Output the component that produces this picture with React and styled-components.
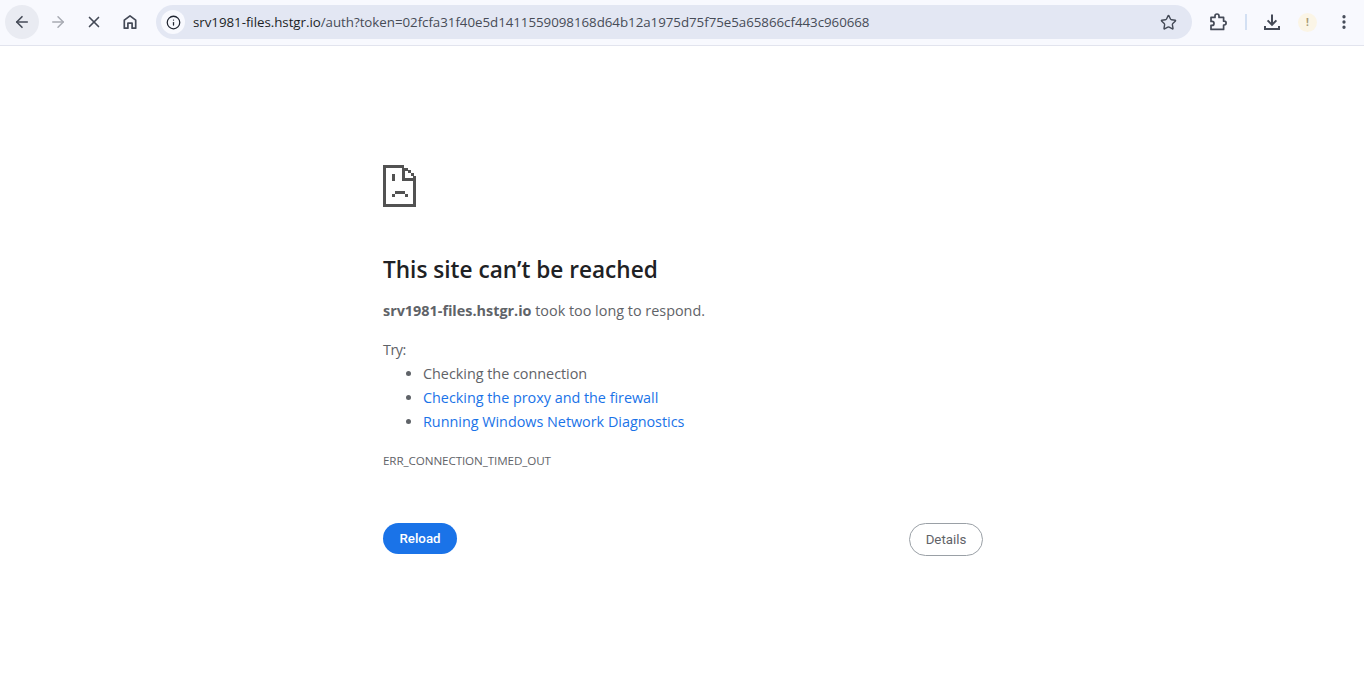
import React from "react";
import styled, { createGlobalStyle } from "styled-components";
import { ArrowLeft, ArrowRight, X, Info, Star, EllipsisVertical } from "lucide-react";

const GlobalStyle = createGlobalStyle`
  html, body {
    margin: 0;
    padding: 0;
    background: #fff;
  }
  body {
    font-family: "Open Sans", "Noto Sans", sans-serif;
    overflow: hidden;
  }
`;

const Page = styled.div`
  width: 1364px;
  height: 678px;
  display: flex;
  flex-direction: column;
`;

const Toolbar = styled.div`
  height: 46px;
  box-sizing: border-box;
  background: #f8f9fe;
  border-bottom: 1px solid #e2e4ee;
  display: flex;
  align-items: center;
  padding: 0 3px 1px 5px;
`;

const NavButton = styled.div`
  width: 34px;
  height: 34px;
  margin-right: 2px;
  border-radius: 50%;
  flex: none;
  display: flex;
  align-items: center;
  justify-content: center;
  color: ${(p) => (p.$disabled ? "#a8abb3" : "#444a57")};
  background: ${(p) => (p.$active ? "#e9ebf2" : "transparent")};
`;

const Omnibox = styled.div`
  flex: none;
  width: 1036px;
  height: 34px;
  margin-left: 7px;
  border-radius: 17px;
  background: #e3e7f3;
  display: flex;
  align-items: center;
  padding: 0 7px 0 5px;
  box-sizing: border-box;
`;

const InfoChip = styled.div`
  width: 24px;
  height: 24px;
  border-radius: 50%;
  background: #f8f9fe;
  color: #1f2430;
  display: flex;
  align-items: center;
  justify-content: center;
  flex: none;
`;

const Url = styled.div`
  margin-left: 8px;
  flex: 1;
  font-size: 13.33px;
  letter-spacing: -0.04px;
  color: #474c57;
  white-space: nowrap;
  b {
    font-weight: 400;
    color: #1c1f26;
  }
`;

const StarButton = styled.div`
  color: #444a57;
  display: flex;
  margin-right: 8px;
`;

const Actions = styled.div`
  display: flex;
  align-items: center;
  margin-left: 9px;
  flex: 1;
`;

const Divider = styled.div`
  width: 2px;
  height: 16px;
  margin: 0 8px;
  background: #d3e0f3;
`;

const Avatar = styled.div`
  width: 19px;
  height: 19px;
  margin: 0 10px 0 7px;
  border-radius: 50%;
  background: #fbf5e6;
  color: #a89a74;
  font-size: 10px;
  font-weight: 700;
  display: flex;
  align-items: center;
  justify-content: center;
`;

const Content = styled.main`
  width: 600px;
  margin-left: 383px;
  padding-top: 119px;
  color: #5f6368;
`;

const ErrorIcon = styled.svg`
  display: block;
  width: 33px;
  height: 42px;
`;

const Heading = styled.h1`
  margin: 48px 0 0;
  font-size: 22.6px;
  line-height: 30px;
  font-weight: 600;
  color: #202124;
`;

const Summary = styled.p`
  margin: 14px 0 0;
  font-size: 14.4px;
  line-height: 24px;
  color: #5f6368;
  b {
    font-weight: 700;
  }
`;

const TryLabel = styled.p`
  margin: 15px 0 0;
  font-size: 14.4px;
  line-height: 24px;
  letter-spacing: -0.5px;
`;

const Suggestions = styled.ul`
  margin: 0;
  padding-left: 40px;
  font-size: 14.4px;
  line-height: 24px;
  letter-spacing: -0.02px;
  color: #5f6368;
`;

const Suggestion = styled.li`
  color: ${(p) => (p.$link ? "#1a73e8" : "#5f6368")};
  &::marker {
    color: #5f6368;
  }
`;

const ErrorCode = styled.div`
  margin-top: 19px;
  font-size: 11.65px;
  line-height: 16px;
  letter-spacing: -0.1px;
  color: #5f6368;
`;

const Buttons = styled.div`
  margin-top: 54px;
  display: flex;
  justify-content: space-between;
  align-items: flex-start;
`;

const PrimaryButton = styled.button`
  width: 74px;
  height: 31px;
  border: 0;
  padding: 0;
  border-radius: 16px;
  background: #1a73e8;
  color: #fff;
  font-family: Roboto, sans-serif;
  font-size: 13.3px;
  font-weight: 500;
`;

const SecondaryButton = styled.button`
  width: 74px;
  height: 33px;
  box-sizing: border-box;
  border: 1px solid #9aa0a6;
  padding: 0;
  border-radius: 17px;
  background: #fff;
  color: #5f6368;
  font-family: Roboto, sans-serif;
  font-size: 13.3px;
  font-weight: 400;
`;

const HomeIcon = () => (
  <svg width="16" height="16" viewBox="0 0 16 16" fill="none" stroke="currentColor" strokeWidth="1.7" strokeLinejoin="round">
    <path d="M2.3 14.2V6.2L8 1.8l5.7 4.4v8h-3.6V9.2H5.9v5z" />
  </svg>
);

const PuzzleIcon = () => (
  <svg width="18" height="18" viewBox="0 0 18 18" fill="none" stroke="currentColor" strokeWidth="1.7" strokeLinejoin="round">
    <path d="M2 4.4h4V3a2 2 0 0 1 4 0v1.4h4.6v3.8h.6a1.9 1.9 0 0 1 0 3.8h-.6v4.4H2v-4h1a1.9 1.9 0 0 0 0-4H2z" />
  </svg>
);

const DownloadIcon = () => (
  <svg width="18" height="18" viewBox="0 0 18 18" fill="none" stroke="currentColor" strokeWidth="2">
    <path d="M9 1.5v10M4.6 7.4 9 11.8l4.4-4.4M2 13v3h14v-3" />
  </svg>
);

const SadPageIcon = () => (
  <ErrorIcon viewBox="0 0 33 42" shapeRendering="crispEdges" fill="#525252">
    <path d="M0 0h21v3H3v36h27V15h3v27H0z" />
    <path d="M19 3h3v10h11v3H19zM22 3h3v3h-3zM25 5h3v3h-3zM28 8h3v3h-3zM30 11h3v3h-3z" />
    <path d="M9 9h3v7H9zM12 26h10v3H12zM9 29h3v3H9zM22 29h3v3h-3z" />
  </ErrorIcon>
);

export default function App() {
  return (
    <Page>
      <GlobalStyle />
      <Toolbar>
        <NavButton $active><ArrowLeft size={18} strokeWidth={2.2} /></NavButton>
        <NavButton $disabled><ArrowRight size={18} strokeWidth={2} /></NavButton>
        <NavButton><X size={18} strokeWidth={2.2} /></NavButton>
        <NavButton><HomeIcon /></NavButton>
        <Omnibox>
          <InfoChip><Info size={15} strokeWidth={2} /></InfoChip>
          <Url><b>srv1981-files.hstgr.io</b>/auth?token=02fcfa31f40e5d1411559098168d64b12a1975d75f75e5a65866cf443c960668</Url>
          <StarButton><Star size={17} strokeWidth={2} /></StarButton>
        </Omnibox>
        <Actions>
          <NavButton><PuzzleIcon /></NavButton>
          <Divider />
          <NavButton><DownloadIcon /></NavButton>
          <Avatar>!</Avatar>
          <NavButton><EllipsisVertical size={18} strokeWidth={2.4} /></NavButton>
        </Actions>
      </Toolbar>
      <Content>
        <SadPageIcon />
        <Heading>This site can’t be reached</Heading>
        <Summary><b>srv1981-files.hstgr.io</b> took too long to respond.</Summary>
        <TryLabel>Try:</TryLabel>
        <Suggestions>
          <Suggestion>Checking the connection</Suggestion>
          <Suggestion $link>Checking the proxy and the firewall</Suggestion>
          <Suggestion $link>Running Windows Network Diagnostics</Suggestion>
        </Suggestions>
        <ErrorCode>ERR_CONNECTION_TIMED_OUT</ErrorCode>
        <Buttons>
          <PrimaryButton>Reload</PrimaryButton>
          <SecondaryButton>Details</SecondaryButton>
        </Buttons>
      </Content>
    </Page>
  );
}
